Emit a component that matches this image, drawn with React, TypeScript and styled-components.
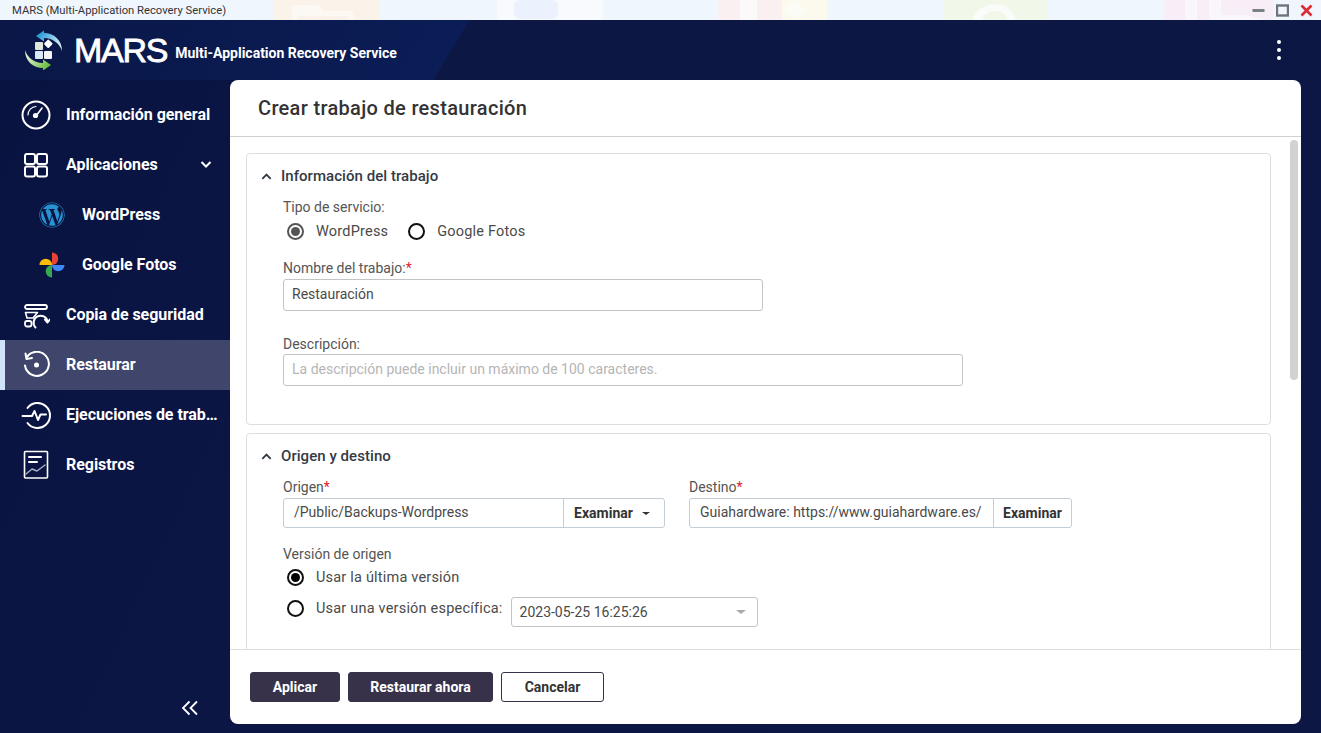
import React from 'react';
import styled, { createGlobalStyle } from 'styled-components';
import { FaWordpress } from 'react-icons/fa';

const GlobalStyle = createGlobalStyle`
    html, body {
        margin: 0;
        padding: 0;
        width: 100%;
        height: 100%;
        overflow: hidden;
    }
    body {
        font-family: Roboto, "Liberation Sans", sans-serif;
    }
    * {
        box-sizing: border-box;
    }
`;

const Page = styled.div`
    width: 1321px;
    height: 733px;
    display: flex;
    flex-direction: column;
    overflow: hidden;
    background: linear-gradient(115deg, #091340 0, #0b1645 30%, #0c1744 100%);
`;

const TitleBar = styled.div`
    position: relative;
    height: 20px;
    flex: none;
    display: flex;
    align-items: center;
    justify-content: space-between;
    padding: 0 8px 0 12px;
    font-size: 11.25px;
    color: #333;
    background: #f0f6fe;
`;

const Wallpaper = styled.svg`
    position: absolute;
    top: 0;
    left: 0;
    opacity: 0.8;
`;

const TitleText = styled.span`
    position: relative;
`;

const WindowControls = styled.div`
    position: relative;
    display: flex;
    align-items: center;
    gap: 11px;
`;

const Header = styled.header`
    height: 60px;
    flex: none;
    display: flex;
    align-items: center;
    padding: 0 40px 0 23px;
    color: #fff;
    background: linear-gradient(121deg, #0a1747 0, #0b1d56 402px, #0c1744 402.5px, #0c1744 100%);
`;

const Brand = styled.div`
    font-family: "Liberation Sans", Arial, sans-serif;
    font-size: 34px;
    letter-spacing: -1.25px;
    margin-left: 11px;
    line-height: 1;
    -webkit-text-stroke: 0.8px #fff;
`;

const Subtitle = styled.div`
    font-size: 14px;
    font-weight: 700;
    margin: 6px 0 0 8px;
    flex: 1;
`;

const MenuDots = styled.div`
    display: flex;
    flex-direction: column;
    gap: 4px;
    span {
        width: 4px;
        height: 4px;
        border-radius: 50%;
        background: #fff;
    }
`;

const Body = styled.div`
    flex: 1;
    min-height: 0;
    display: flex;
    padding-right: 20px;
    padding-bottom: 9px;
`;

const Sidebar = styled.nav`
    width: 230px;
    flex: none;
    display: flex;
    flex-direction: column;
    padding-top: 10px;
    color: #fff;
`;

const NavItem = styled.div<{ $active?: boolean; $child?: boolean }>`
    height: 50px;
    flex: none;
    display: flex;
    align-items: center;
    gap: ${(p) => (p.$child ? '15px' : '14px')};
    padding-left: ${(p) => (p.$child ? '37px' : '20px')};
    padding-right: 12px;
    font-size: 16px;
    font-weight: 700;
    letter-spacing: -0.05px;
    background: ${(p) => (p.$active ? '#40456c' : 'transparent')};
    border-left: ${(p) => (p.$active ? '5px solid #cfe3fb' : '0')};
    ${(p) => p.$active && 'padding-left: 15px;'}
`;

const NavIcon = styled.span<{ $size?: number }>`
    width: ${(p) => p.$size ?? 32}px;
    height: ${(p) => p.$size ?? 32}px;
    flex: none;
    display: flex;
    align-items: center;
    justify-content: center;
`;

const NavLabel = styled.span`
    flex: 1;
    min-width: 0;
    margin-bottom: 2px;
    overflow: hidden;
    white-space: nowrap;
    text-overflow: ellipsis;
`;

const NavChevron = styled.span`
    display: flex;
    margin: 0 5px 2px 0;
`;

const Collapse = styled.div`
    margin-top: auto;
    display: flex;
    justify-content: flex-end;
    padding: 0 31px 8px 0;
`;

const Panel = styled.main`
    flex: 1;
    min-width: 0;
    display: flex;
    flex-direction: column;
    background: #fff;
    border-radius: 8px;
    overflow: hidden;
`;

const PanelTitle = styled.h1`
    height: 57px;
    flex: none;
    margin: 0;
    padding: 0 28px 1px;
    display: flex;
    align-items: center;
    font-size: 20px;
    font-weight: 500;
    letter-spacing: 0.32px;
    color: #333;
    border-bottom: 1px solid #d0d0d0;
`;

const ScrollArea = styled.div`
    flex: 1;
    min-height: 0;
    position: relative;
    overflow: hidden;
    padding: 16px 30px 0 16px;
    display: flex;
    flex-direction: column;
    gap: 8px;
`;

const ScrollThumb = styled.div`
    position: absolute;
    top: 3px;
    right: 3px;
    width: 8px;
    height: 240px;
    border-radius: 4px;
    background: #d2d2d2;
`;

const Card = styled.section<{ $height: number }>`
    height: ${(p) => p.$height}px;
    flex: none;
    border: 1px solid #dedede;
    border-radius: 4px;
    padding: 13px 0 0 13px;
`;

const CardHeader = styled.div`
    display: flex;
    align-items: center;
    gap: 8px;
    height: 18px;
    font-size: 15px;
    font-weight: 500;
    letter-spacing: 0.05px;
    color: #333a45;
`;

const CardBody = styled.div`
    padding-left: 23px;
    display: flex;
    flex-direction: column;
`;

const Label = styled.div<{ $top?: number; $bottom?: number }>`
    font-size: 14px;
    line-height: 18px;
    color: #555;
    margin-top: ${(p) => p.$top ?? 0}px;
    margin-bottom: ${(p) => p.$bottom ?? 1}px;
`;

const Required = styled.span`
    color: #e02030;
`;

const RadioRow = styled.div<{ $height?: number }>`
    display: flex;
    align-items: center;
    gap: 20px;
    height: ${(p) => p.$height ?? 28}px;
    padding-left: 4px;
`;

const RadioLabel = styled.label`
    display: flex;
    align-items: center;
    gap: 12px;
    font-size: 14.5px;
    letter-spacing: 0.2px;
    color: #4a4a4a;
`;

const RadioCircle = styled.span<{ $checked?: boolean; $strong?: boolean }>`
    width: 17px;
    height: 17px;
    flex: none;
    border-radius: 50%;
    border: 2px solid ${(p) => (p.$checked && !p.$strong ? '#555' : '#111')};
    display: flex;
    align-items: center;
    justify-content: center;
    &::after {
        content: '';
        width: 9px;
        height: 9px;
        border-radius: 50%;
        background: ${(p) => (p.$checked ? (p.$strong ? '#000' : '#555') : 'transparent')};
    }
`;

const TextField = styled.div<{ $width: number; $muted?: boolean }>`
    width: ${(p) => p.$width}px;
    height: 32px;
    display: flex;
    align-items: center;
    padding: 0 8px 2px;
    font-size: 14px;
    color: ${(p) => (p.$muted ? '#b5b5b5' : '#4a4a4a')};
    border: 1px solid #c4c4c4;
    border-radius: 3px;
`;

const Columns = styled.div`
    display: flex;
    gap: 24px;
`;

const Field = styled.div`
    display: flex;
    flex-direction: column;
`;

const InputGroup = styled.div<{ $width: number }>`
    width: ${(p) => p.$width}px;
    height: 30px;
    display: flex;
    border: 1px solid #c4ccd4;
    border-radius: 3px;
`;

const GroupValue = styled.div`
    flex: 1;
    min-width: 0;
    display: flex;
    align-items: center;
    padding: 0 0 2px 10px;
    font-size: 14px;
    color: #4a4a4a;
    white-space: nowrap;
    overflow: hidden;
    border-right: 1px solid #c4ccd4;
`;

const GroupButton = styled.div<{ $width: number; $caret?: boolean }>`
    width: ${(p) => p.$width}px;
    flex: none;
    display: flex;
    align-items: center;
    justify-content: center;
    gap: 9px;
    padding-right: ${(p) => (p.$caret ? '4px' : '0')};
    font-size: 14px;
    font-weight: 700;
    color: #333;
`;

const Caret = styled.span<{ $color?: string; $size?: number }>`
    width: 0;
    height: 0;
    border-left: ${(p) => p.$size ?? 4}px solid transparent;
    border-right: ${(p) => p.$size ?? 4}px solid transparent;
    border-top: ${(p) => (p.$size ?? 4) - 1}px solid ${(p) => p.$color ?? '#333'};
`;

const SelectField = styled.div`
    width: 247px;
    height: 30px;
    margin: 8px 0 0 -12px;
    display: flex;
    align-items: center;
    justify-content: space-between;
    padding: 0 11px 0 8px;
    font-size: 14px;
    color: #4a4a4a;
    border: 1px solid #c4c4c4;
    border-radius: 3px;
`;

const Footer = styled.footer`
    height: 75px;
    flex: none;
    display: flex;
    align-items: flex-start;
    gap: 8px;
    padding: 22px 20px 0;
    border-top: 1px solid #dedede;
`;

const Button = styled.button<{ $outline?: boolean; $width: number }>`
    width: ${(p) => p.$width}px;
    height: 30px;
    padding: 0;
    font-family: inherit;
    font-size: 14px;
    font-weight: 700;
    border-radius: 3px;
    color: ${(p) => (p.$outline ? '#333' : '#fff')};
    background: ${(p) => (p.$outline ? '#fff' : '#37324a')};
    border: 1px solid #37324a;
`;

// iconos del menú lateral
const stroke = { fill: 'none', stroke: '#fff', strokeWidth: 2, strokeLinecap: 'round', strokeLinejoin: 'round' } as const;

const WallpaperIcons = () => (
    <Wallpaper width="1321" height="20" viewBox="0 0 1321 20">
        <rect x="273" width="107" height="20" fill="#fef3e6" />
        <path d="M292 20 V8 Q292 5 296 5 H318 L323 11 H349 Q353 11 353 14 V20 H348 V16 H297 V20Z" fill="#fffaf4" />
        <rect x="497" width="106" height="20" fill="#fafcff" />
        <rect x="514" width="44" height="19" rx="6" fill="#ebf2fd" />
        <rect x="718" width="109" height="20" fill="#fdeeee" />
        <rect x="740" width="17" height="20" fill="#fffafa" />
        <rect x="782" width="45" height="20" fill="#fefce8" />
        <path d="M795 0 L807 10 L795 20 L783 10Z" fill="#fffef6" />
        <rect x="943" width="105" height="20" fill="#f2f9e6" />
        <path d="M973 20 C975 2 1010 -4 1016 20 H1008 C1004 8 986 8 982 20Z" fill="#fcfef8" />
        <rect x="1164" width="109" height="20" fill="#f9edf6" />
        <rect x="1185" width="12" height="20" fill="#fdf8fc" />
        <rect x="1209" width="12" height="20" fill="#fdf8fc" />
        <path d="M1221 20 V15 H1245 L1265 20Z" fill="#fdf8fc" />
    </Wallpaper>
);

const MarsLogo = () => (
    <svg width="40" height="40" viewBox="0 0 40 40">
        <defs>
            <linearGradient id="marsBlue" x1="0" y1="0" x2="1" y2="0.6">
                <stop offset="0.2" stopColor="#2a9fd8" />
                <stop offset="1" stopColor="#dcedf8" />
            </linearGradient>
            <linearGradient id="marsGreen" x1="0" y1="0" x2="1" y2="0.6">
                <stop offset="0.2" stopColor="#6dc043" />
                <stop offset="1" stopColor="#e3f2da" />
            </linearGradient>
        </defs>
        <path d="M13 6 L21 0.5 L21 3 C31 3 39 10 39 21 C37 14 30 8 21 8 L21 11.5 Z" fill="url(#marsBlue)" />
        <path
            d="M13 6 L21 0.5 L21 3 C31 3 39 10 39 21 C37 14 30 8 21 8 L21 11.5 Z"
            fill="url(#marsGreen)"
            transform="rotate(180 20.5 20.5)"
        />
        <rect x="12" y="12" width="8" height="8" rx="1" fill="#dfe8da" />
        <rect x="22" y="10.5" width="6.5" height="6.5" rx="1" fill="#fff" transform="rotate(45 25.2 13.8)" />
        <rect x="12" y="21" width="8" height="8" rx="1" fill="#d6eafa" />
        <rect x="21" y="21" width="8" height="8" rx="1" fill="#f2f4f6" />
    </svg>
);

const GaugeIcon = () => (
    <svg width="30" height="30" viewBox="0 0 30 30">
        <circle cx="15" cy="15" r="13.5" {...stroke} />
        <path d="M7 15 A8.5 8.5 0 0 1 15 6.5" {...stroke} strokeWidth={1.2} />
        <path d="M21 8 L16.5 14" {...stroke} strokeWidth={1.6} />
        <circle cx="14.5" cy="15.5" r="2.6" fill="#fff" />
    </svg>
);

const AppsIcon = () => (
    <svg width="26" height="26" viewBox="0 0 26 26">
        <rect x="2" y="2" width="10" height="10" rx="2" {...stroke} />
        <rect x="14" y="2" width="10" height="10" rx="2" {...stroke} />
        <rect x="2" y="14.5" width="10" height="10" rx="2" {...stroke} />
        <rect x="14" y="14.5" width="10" height="10" rx="2" {...stroke} />
    </svg>
);

const BackupIcon = () => (
    <svg width="28" height="28" viewBox="0 0 28 28">
        <rect x="3" y="4" width="22" height="4" rx="2" {...stroke} strokeWidth={1.8} />
        <path d="M3.5 11.5 H15.5 L11 17 H5 Z" {...stroke} strokeWidth={1.6} />
        <rect x="3" y="20" width="6.5" height="5.5" rx="2" {...stroke} strokeWidth={1.8} />
        <path d="M13.5 26.5 A7 7 0 1 1 25.5 20.5" {...stroke} />
        <path d="M23 18.5 L25.5 21.5 L27.8 18.5" {...stroke} />
    </svg>
);

const RestoreIcon = () => (
    <svg width="28" height="28" viewBox="0 0 28 28">
        <path d="M5 6 A12 12 0 1 1 3 14.5" {...stroke} />
        <path d="M3.5 2.5 L4.5 8 L10 7" {...stroke} />
        <circle cx="14.5" cy="14" r="2.5" fill="#fff" />
    </svg>
);

const ActivityIcon = () => (
    <svg width="30" height="30" viewBox="0 0 30 30">
        <path d="M6.5 8 A12.5 12.5 0 1 1 6.5 23" {...stroke} />
        <path d="M1.5 16 H11 L13.5 11 L17 20 L19.5 14.5 H25" {...stroke} />
    </svg>
);

const LogIcon = () => (
    <svg width="26" height="30" viewBox="0 0 26 30">
        <rect x="1.5" y="1.5" width="23" height="26.5" rx="1" {...stroke} strokeWidth={1.6} />
        <path d="M6 7 H18 M6 12 H14" {...stroke} />
        <path d="M3 24 L9 19 L14 21 L22 15" {...stroke} stroke="#aab1c4" strokeWidth={1.4} />
    </svg>
);

const WordPressIcon = () => <FaWordpress size={26} color="#2793d3" />;

const PhotosIcon = () => (
    <svg width="26" height="26" viewBox="0 0 26 26">
        <path d="M13 13 H0.5 A6.25 6.25 0 0 1 13 13 Z" fill="#fbbc05" />
        <path d="M13 13 V0.5 A6.25 6.25 0 0 1 13 13 Z" fill="#ea4335" />
        <path d="M13 13 H25.5 A6.25 6.25 0 0 1 13 13 Z" fill="#4285f4" />
        <path d="M13 13 V25.5 A6.25 6.25 0 0 1 13 13 Z" fill="#34a853" />
    </svg>
);

const Chevron = ({ up, color = '#fff', size = 14 }: { up?: boolean; color?: string; size?: number }) => (
    <svg width={size} height={size} viewBox="0 0 14 14">
        <path d={up ? 'M2.5 9.5 L7 5 L11.5 9.5' : 'M2.5 5 L7 9.5 L11.5 5'} fill="none" stroke={color} strokeWidth="2" />
    </svg>
);

const navItems = [
    { label: 'Información general', icon: <GaugeIcon /> },
    { label: 'Aplicaciones', icon: <AppsIcon />, chevron: true },
    { label: 'WordPress', icon: <WordPressIcon />, child: true },
    { label: 'Google Fotos', icon: <PhotosIcon />, child: true },
    { label: 'Copia de seguridad', icon: <BackupIcon /> },
    { label: 'Restaurar', icon: <RestoreIcon />, active: true },
    { label: 'Ejecuciones de trabajos', icon: <ActivityIcon /> },
    { label: 'Registros', icon: <LogIcon /> },
];

const App: React.FC = () => {
    return (
        <Page>
            <GlobalStyle />
            <TitleBar>
                <WallpaperIcons />
                <TitleText>MARS (Multi-Application Recovery Service)</TitleText>
                <WindowControls>
                    <svg width="13" height="13" viewBox="0 0 13 13">
                        <rect x="0.5" y="5" width="12" height="3" fill="#7a7f88" />
                    </svg>
                    <svg width="13" height="13" viewBox="0 0 13 13">
                        <rect x="1" y="1.5" width="11" height="10" fill="none" stroke="#6f747c" strokeWidth="2.4" />
                    </svg>
                    <svg width="13" height="13" viewBox="0 0 13 13">
                        <path d="M1.5 1.5 L11.5 11.5 M11.5 1.5 L1.5 11.5" stroke="#dd2c32" strokeWidth="2.6" />
                    </svg>
                </WindowControls>
            </TitleBar>
            <Header>
                <MarsLogo />
                <Brand>MARS</Brand>
                <Subtitle>Multi-Application Recovery Service</Subtitle>
                <MenuDots>
                    <span />
                    <span />
                    <span />
                </MenuDots>
            </Header>
            <Body>
                <Sidebar>
                    {navItems.map((item) => (
                        <NavItem key={item.label} $active={item.active} $child={item.child}>
                            <NavIcon $size={item.child ? 30 : 32}>{item.icon}</NavIcon>
                            <NavLabel>{item.label}</NavLabel>
                            {item.chevron && (
                                <NavChevron>
                                    <Chevron />
                                </NavChevron>
                            )}
                        </NavItem>
                    ))}
                    <Collapse>
                        <svg width="18" height="16" viewBox="0 0 18 16">
                            <path d="M8.5 1.5 L2 8 L8.5 14.5 M16 1.5 L9.5 8 L16 14.5" fill="none" stroke="#fff" strokeWidth="1.8" />
                        </svg>
                    </Collapse>
                </Sidebar>
                <Panel>
                    <PanelTitle>Crear trabajo de restauración</PanelTitle>
                    <ScrollArea>
                        <ScrollThumb />
                        <Card $height={272}>
                            <CardHeader>
                                <Chevron up color="#333a45" size={13} />
                                Información del trabajo
                            </CardHeader>
                            <CardBody>
                                <Label $top={13}>Tipo de servicio:</Label>
                                <RadioRow>
                                    <RadioLabel>
                                        <RadioCircle $checked />
                                        WordPress
                                    </RadioLabel>
                                    <RadioLabel>
                                        <RadioCircle />
                                        Google Fotos
                                    </RadioLabel>
                                </RadioRow>
                                <Label $top={14} $bottom={2}>
                                    Nombre del trabajo:<Required>*</Required>
                                </Label>
                                <TextField $width={480}>Restauración</TextField>
                                <Label $top={24}>Descripción:</Label>
                                <TextField $width={680} $muted>
                                    La descripción puede incluir un máximo de 100 caracteres.
                                </TextField>
                            </CardBody>
                        </Card>
                        <Card $height={260}>
                            <CardHeader>
                                <Chevron up color="#333a45" size={13} />
                                Origen y destino
                            </CardHeader>
                            <CardBody>
                                <Columns>
                                    <Field>
                                        <Label $top={13} $bottom={2}>
                                            Origen<Required>*</Required>
                                        </Label>
                                        <InputGroup $width={382}>
                                            <GroupValue>/Public/Backups-Wordpress</GroupValue>
                                            <GroupButton $width={100} $caret>
                                                Examinar
                                                <Caret />
                                            </GroupButton>
                                        </InputGroup>
                                    </Field>
                                    <Field>
                                        <Label $top={13} $bottom={2}>
                                            Destino<Required>*</Required>
                                        </Label>
                                        <InputGroup $width={383}>
                                            <GroupValue>Guiahardware: https://www.guiahardware.es/</GroupValue>
                                            <GroupButton $width={77}>Examinar</GroupButton>
                                        </InputGroup>
                                    </Field>
                                </Columns>
                                <Label $top={17} $bottom={2}>
                                    Versión de origen
                                </Label>
                                <RadioRow $height={24}>
                                    <RadioLabel>
                                        <RadioCircle $checked $strong />
                                        Usar la última versión
                                    </RadioLabel>
                                </RadioRow>
                                <RadioRow $height={38}>
                                    <RadioLabel>
                                        <RadioCircle />
                                        Usar una versión específica:
                                    </RadioLabel>
                                    <SelectField>
                                        2023-05-25 16:25:26
                                        <Caret $color="#aaa" $size={5} />
                                    </SelectField>
                                </RadioRow>
                            </CardBody>
                        </Card>
                    </ScrollArea>
                    <Footer>
                        <Button $width={90}>Aplicar</Button>
                        <Button $width={145}>Restaurar ahora</Button>
                        <Button $width={103} $outline>
                            Cancelar
                        </Button>
                    </Footer>
                </Panel>
            </Body>
        </Page>
    );
};

export default App;
